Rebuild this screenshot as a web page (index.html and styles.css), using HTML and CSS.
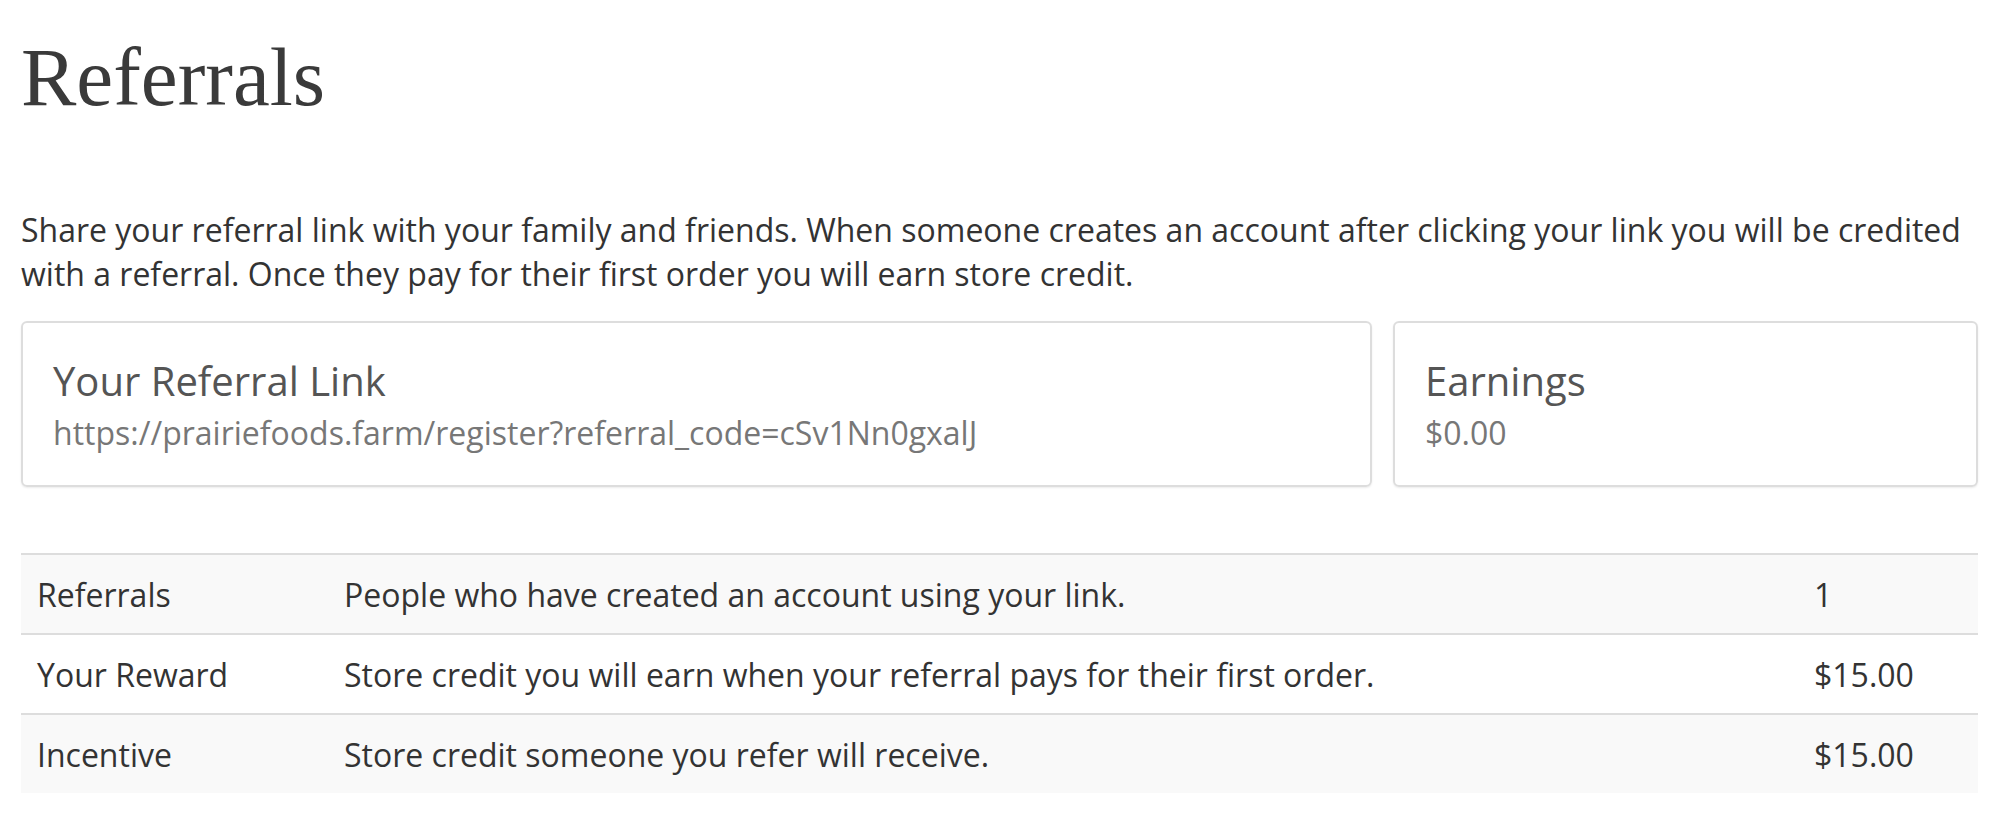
FILE: index.html
```html
<!DOCTYPE html>
<html lang="en">
<head>
<meta charset="utf-8">
<title>Referrals</title>
<link rel="stylesheet" href="styles.css">
</head>
<body>
<main class="page">
  <h1 class="title">Referrals</h1>
  <p class="intro">Share your referral link with your family and friends. When someone creates an account after clicking your link you will be credited with a referral. Once they pay for their first order you will earn store credit.</p>
  <div class="cards">
    <section class="card card-link">
      <h2 class="card-title">Your Referral Link</h2>
      <div class="card-value">https://prairiefoods.farm/register?referral_code=cSv1Nn0gxalJ</div>
    </section>
    <section class="card card-earn">
      <h2 class="card-title">Earnings</h2>
      <div class="card-value">$0.00</div>
    </section>
  </div>
  <table class="stats">
    <tbody>
      <tr class="striped">
        <td class="c-name">Referrals</td>
        <td class="c-desc">People who have created an account using your link.</td>
        <td class="c-val">1</td>
      </tr>
      <tr>
        <td class="c-name">Your Reward</td>
        <td class="c-desc">Store credit you will earn when your referral pays for their first order.</td>
        <td class="c-val">$15.00</td>
      </tr>
      <tr class="striped">
        <td class="c-name">Incentive</td>
        <td class="c-desc">Store credit someone you refer will receive.</td>
        <td class="c-val">$15.00</td>
      </tr>
    </tbody>
  </table>
</main>
</body>
</html>
```
FILE: styles.css
```css
html, body {
  margin: 0;
  padding: 0;
  background: #fff;
}
body {
  font-family: "Open Sans", "Noto Sans", sans-serif;
  color: #333;
}
.page {
  padding: 0 12px 0 21px;
}
.title {
  font-family: "Liberation Serif", "DejaVu Serif", serif;
  font-weight: 400;
  font-size: 83px;
  line-height: 1;
  color: #3a3a3a;
  margin: 0;
  padding-top: 36px;
}
.intro {
  font-size: 32px;
  line-height: 44px;
  margin: 89px 0 0 0;
}
.cards {
  display: flex;
  gap: 21px;
  margin-top: 25px;
}
.card {
  border: 2px solid #ddd;
  border-radius: 6px;
  box-shadow: 0 1px 2px rgba(0,0,0,0.08);
  padding: 33px 30px 0 30px;
  box-sizing: border-box;
  height: 166px;
}
.card-link { flex: 0 0 1351px; }
.card-earn { flex: 1 1 auto; }
.card-title {
  font-size: 40px;
  font-weight: 400;
  line-height: 50px;
  margin: 0;
  color: #555;
}
.card-value {
  font-size: 32px;
  line-height: 44px;
  color: #777;
  margin-top: 5px;
}
.stats {
  width: 100%;
  border-collapse: collapse;
  margin-top: 66px;
  font-size: 32px;
}
.stats td {
  border-top: 2px solid #ddd;
  height: 78px;
  padding: 0 16px;
  vertical-align: middle;
}
.stats tr.striped td {
  background: #f9f9f9;
}
.c-name { width: 275px; }
.c-val { width: 148px; }
```
